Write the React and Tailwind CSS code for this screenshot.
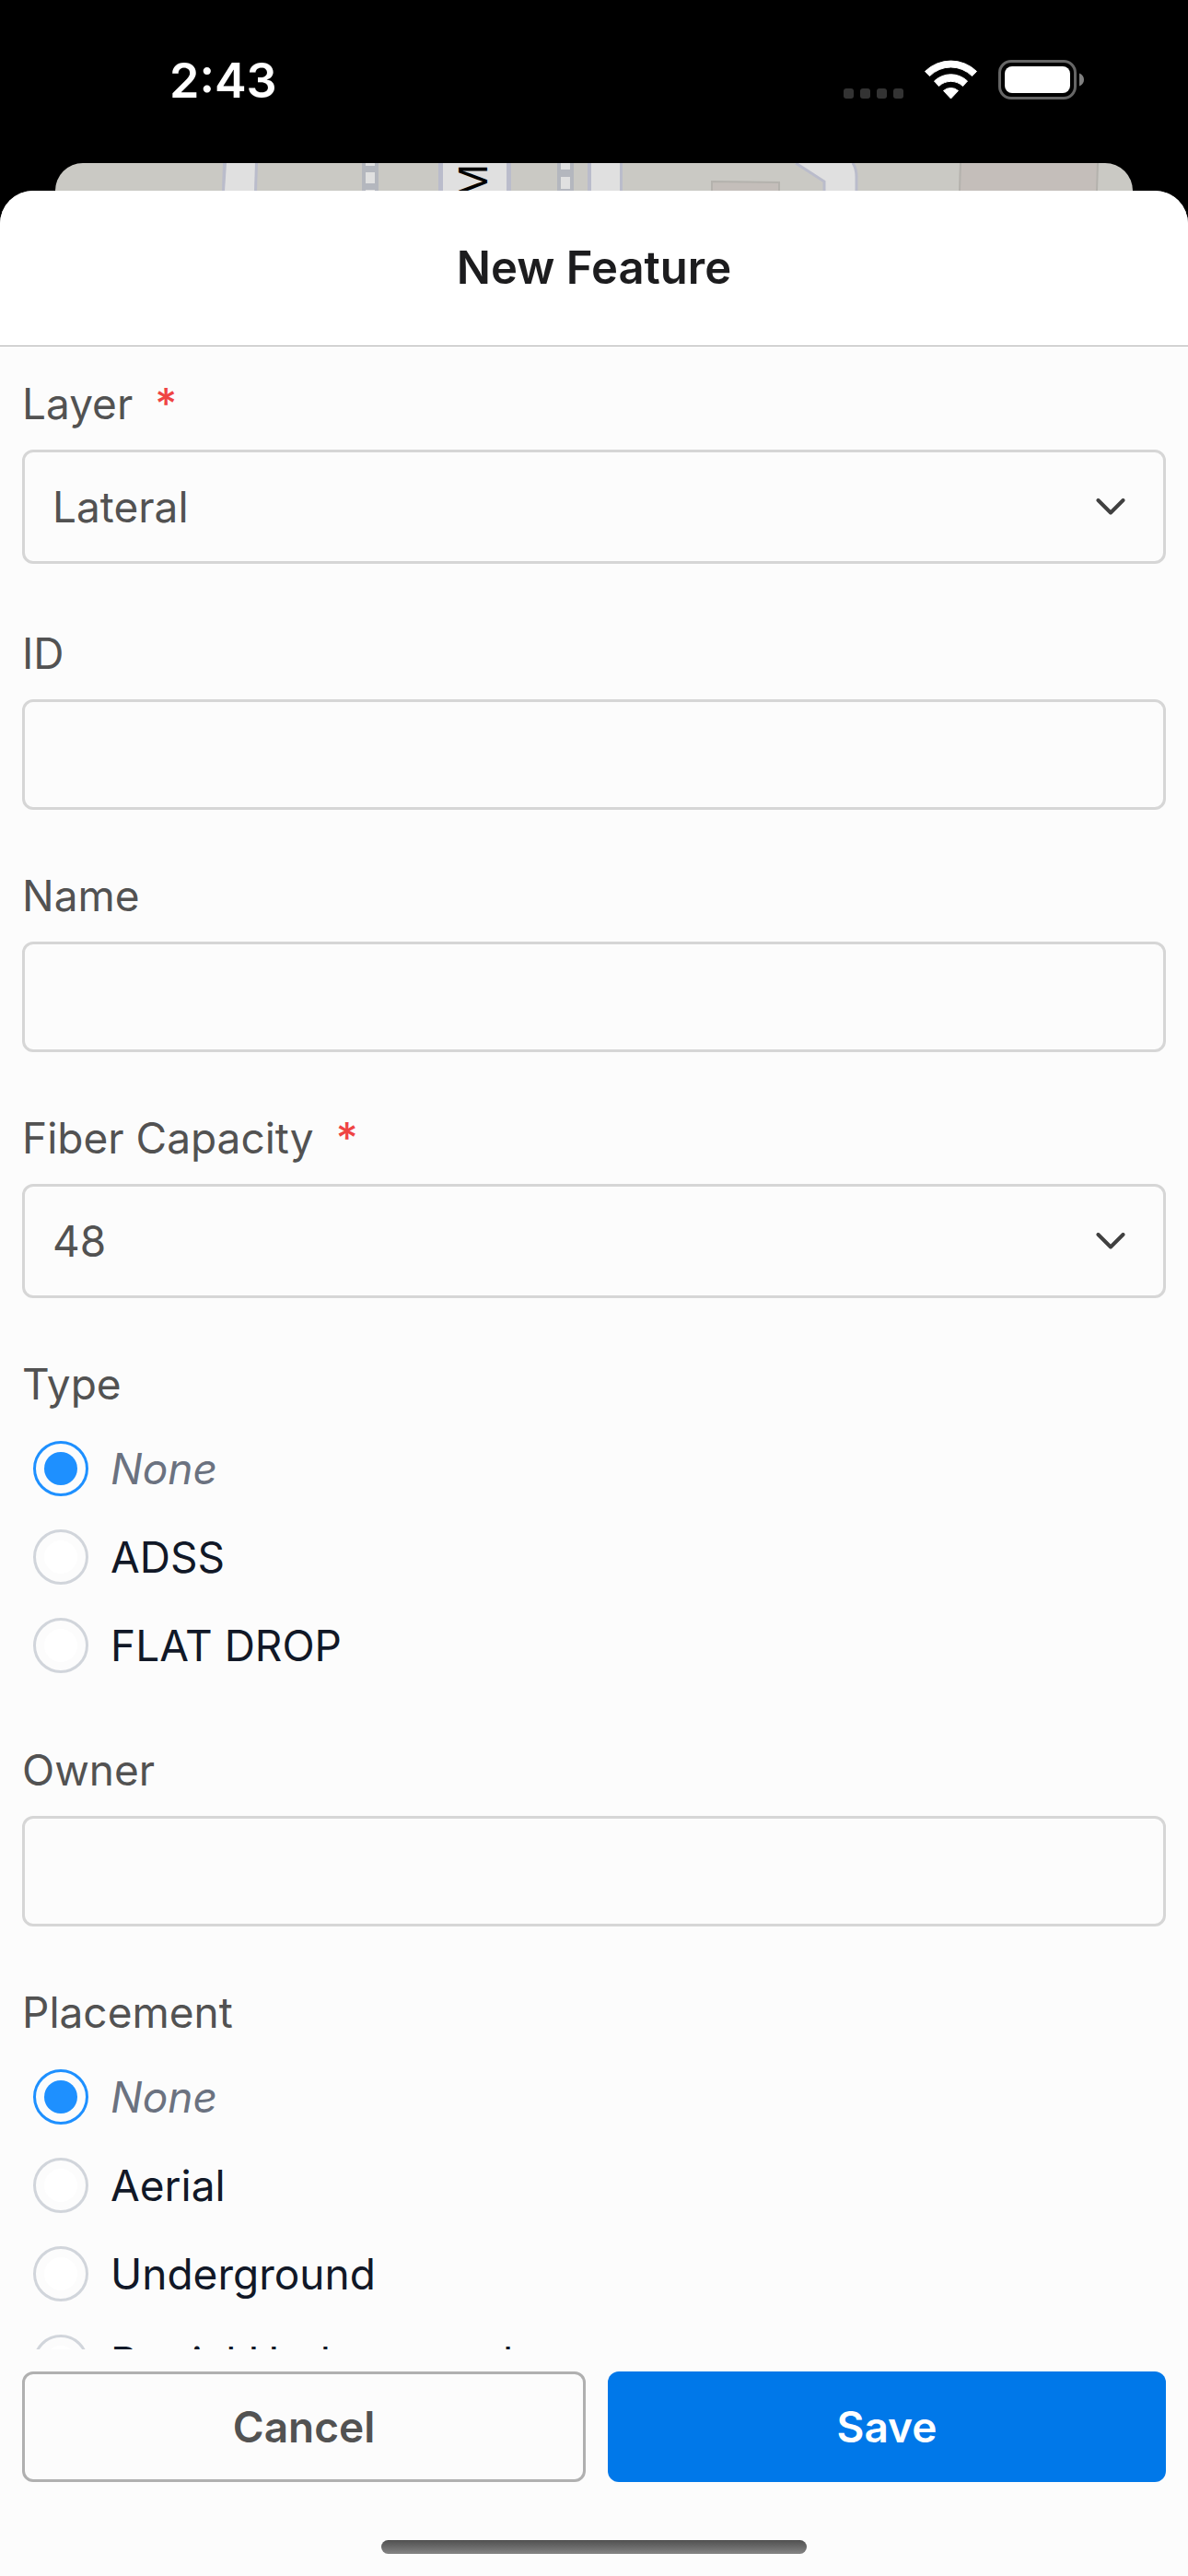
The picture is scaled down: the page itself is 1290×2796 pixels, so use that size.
import { useState } from 'react'

function StatusIcons() {
  return (
    <svg viewBox="0 0 262 44" className="h-11 w-[262px]" role="img" aria-label="No signal, Wi-Fi, battery full">
      <g fill="#333333">
        <rect x="1" y="32" width="11" height="11" rx="3" />
        <rect x="19" y="32" width="11" height="11" rx="3" />
        <rect x="37" y="32" width="11" height="11" rx="3" />
        <rect x="55" y="32" width="11" height="11" rx="3" />
      </g>
      <g fill="#ffffff" stroke="#ffffff" strokeWidth="1" strokeLinejoin="round">
        <path d="M89.500 13.500 A40 40 0 0 1 145.500 13.500 L140.500 18.500 A32.500 32.500 0 0 0 94.500 18.500 Z" />
        <path d="M99.500 24 A26 26 0 0 1 135.500 24 L130.500 29.500 A19 19 0 0 0 104.500 29.500 Z" />
        <path d="M109.500 34.500 A12 12 0 0 1 125.500 34.500 L117.500 43 Z" />
      </g>
      <rect x="170.500" y="2.500" width="82" height="40" rx="12.500" fill="none" stroke="#666666" strokeWidth="3" />
      <rect x="176" y="8" width="71" height="29" rx="8" fill="#ffffff" />
      <path d="M257 15.500 C260.500 17 262 19.500 262 22.500 C262 25.500 260.500 28 257 29.500 Z" fill="#808080" />
    </svg>
  )
}

function MapStrip() {
  return (
    <svg viewBox="60 177 1170 30" preserveAspectRatio="xMidYMin slice" className="block h-[30px] w-full" aria-hidden="true">
      <rect x="60" y="177" width="1170" height="30" fill="#cac9c4" />

      <path d="M242 177 H280 L279 207 H241 Z" fill="#babccb" />
      <path d="M246 177 H277 L276 207 H244 Z" fill="#e0e0e0" />

      <rect x="393" y="177" width="18" height="30" fill="#b4b7be" />
      <path d="M397 177 h10 v3 h-10 Z M397 187 h10 v12 h-10 Z M397 206 h10 v1 h-10 Z" fill="#e0e0e0" />

      <rect x="476" y="177" width="79" height="30" fill="#babccb" />
      <rect x="481" y="177" width="69" height="30" fill="#e0e0e0" />
      <text transform="translate(529 216) rotate(-90)" fontSize="42" fontFamily="Inter, sans-serif" fill="#000000">M</text>

      <rect x="605" y="177" width="18" height="30" fill="#b4b7be" />
      <path d="M609 177 h10 v7 h-10 Z M609 192 h10 v13 h-10 Z" fill="#e0e0e0" />

      <rect x="638" y="177" width="38" height="30" fill="#babccb" />
      <rect x="642" y="177" width="31" height="30" fill="#e0e0e0" />

      <path d="M863 177 H925 Q930 184 930 192 V207 H895 V198 Z" fill="#e0e0e0" />
      <path d="M864 177 L895 197 V207" fill="none" stroke="#babccb" strokeWidth="3" />
      <path d="M926 177 Q930 183 930 192 V207" fill="none" stroke="#babccb" strokeWidth="3" />

      <path d="M773 210 V197 L846 198 V210 Z" fill="#c4beba" stroke="#b4b2ad" strokeWidth="2" />
      <path d="M1042 177 H1192 L1191 207 H1041 Z" fill="#c4beba" />
      <path d="M1043 177 L1042 207 M1192 177 L1191 207" fill="none" stroke="#b4b2ad" strokeWidth="2" />
    </svg>
  )
}

function Label({ htmlFor, required, children }) {
  return (
    <label htmlFor={htmlFor} className="mb-5 flex gap-6 text-[46px] leading-[60px] text-[#525252]">
      {children}
      {required && <span className="font-medium text-[#ef4444]">*</span>}
    </label>
  )
}

function TextField({ id, label }) {
  return (
    <div>
      <Label htmlFor={id}>{label}</Label>
      <input
        id={id}
        type="text"
        className="block h-[120px] w-full rounded-xl border-3 border-[#d6d6d6] bg-transparent px-[30px] text-[46px] text-[#525252]"
      />
    </div>
  )
}

function SelectField({ id, label, options }) {
  return (
    <div>
      <Label htmlFor={id} required>{label}</Label>
      <div className="relative">
        <select
          id={id}
          required
          className="block h-[124px] w-full appearance-none rounded-xl border-3 border-[#d6d6d6] bg-transparent px-[30px] text-[46px] text-[#525252]"
        >
          {options.map((option) => (
            <option key={option}>{option}</option>
          ))}
        </select>
        <svg
          viewBox="0 0 32 18"
          className="pointer-events-none absolute top-1/2 right-11 h-[18px] w-8 -translate-y-1/2"
          fill="none"
          stroke="#404040"
          strokeWidth="4"
          strokeLinecap="round"
          strokeLinejoin="round"
          aria-hidden="true"
        >
          <path d="M2.500 2 L16 15.500 L29.500 2" />
        </svg>
      </div>
    </div>
  )
}

function RadioField({ name, label, options }) {
  const [value, setValue] = useState('None')

  return (
    <fieldset>
      <legend className="mb-8 text-[46px] leading-[60px] text-[#525252]">{label}</legend>
      <div className="flex flex-col gap-9 pl-3">
        {options.map((option) => (
          <label key={option} className="flex items-center gap-6 text-[46px] leading-[60px] text-[#111827]">
            <input
              type="radio"
              name={name}
              value={option}
              checked={value === option}
              onChange={() => setValue(option)}
              className="grid size-[60px] shrink-0 appearance-none place-items-center rounded-full border-3 border-[#d1d5db] before:size-9 before:rounded-full before:bg-white checked:border-[#1e90ff] checked:before:bg-[#1e90ff]"
            />
            <span className={option === 'None' ? 'text-[#6b7280] italic' : ''}>{option}</span>
          </label>
        ))}
      </div>
    </fieldset>
  )
}

export default function App() {
  return (
    <div className="flex h-screen flex-col bg-black font-['Inter',sans-serif]">
      <header className="flex h-[177px] shrink-0 items-start justify-between pt-[54px] pr-[113px] pl-[184px]">
        <time className="text-[52px] leading-[68px] font-semibold text-white">2:43</time>
        <div className="pt-2.5">
          <StatusIcons />
        </div>
      </header>

      <div className="mx-[60px] shrink-0 overflow-hidden rounded-t-[30px]">
        <MapStrip />
      </div>

      <main className="flex min-h-0 flex-1 flex-col rounded-t-[36px] bg-[#fcfcfc]">
        <div className="shrink-0 rounded-t-[36px] border-b border-[#b0b0b0] bg-white py-[54px]">
          <h1 className="text-center text-[49px] leading-[60px] font-semibold text-[#1c1c1e]">New Feature</h1>
        </div>

        <form className="flex min-h-0 flex-1 flex-col">
          <div className="flex min-h-0 flex-1 flex-col gap-[63px] overflow-y-auto px-6 pt-8 [scrollbar-width:none]">
            <div className="pb-1">
              <SelectField id="layer" label="Layer" options={['Lateral']} />
            </div>
            <TextField id="feature-id" label="ID" />
            <TextField id="name" label="Name" />
            <SelectField id="fiber-capacity" label="Fiber Capacity" options={['48']} />
            <div className="pb-3">
              <RadioField name="type" label="Type" options={['None', 'ADSS', 'FLAT DROP']} />
            </div>
            <TextField id="owner" label="Owner" />
            <div className="pb-3">
              <RadioField
                name="placement"
                label="Placement"
                options={['None', 'Aerial', 'Underground', 'Partial Underground']}
              />
            </div>
          </div>

          <div className="flex shrink-0 gap-6 px-6 pt-6 pb-[63px] text-[46px] font-semibold">
            <button type="button" className="h-[120px] flex-1 rounded-xl border-3 border-[#b0b0b0] text-[#525252]">
              Cancel
            </button>
            <button type="submit" className="h-[120px] flex-1 rounded-xl bg-[#0078e9] text-white">
              Save
            </button>
          </div>
        </form>

        <div className="mx-auto mb-6 h-[15px] w-[462px] shrink-0 rounded-full bg-linear-to-b from-[#505050] to-[#858585]" />
      </main>
    </div>
  )
}
